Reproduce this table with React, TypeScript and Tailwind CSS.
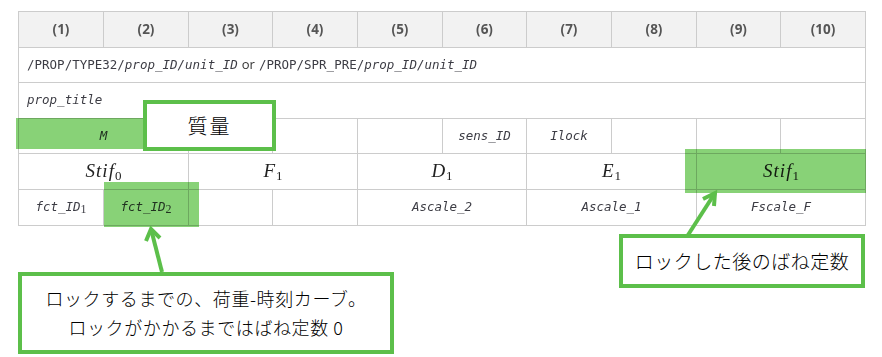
import React from "react";

const mono = "font-['DejaVu_Sans_Mono',monospace] text-[12.5px]";
const cell = "border-r border-b border-[#cccccc] flex items-center justify-center";

function Mono({ children, italic = true }: { children: React.ReactNode; italic?: boolean }) {
  return <span className={`${mono} ${italic ? "italic" : ""} text-[#3c3c44]`}>{children}</span>;
}

function Sub({ children }: { children: React.ReactNode }) {
  return (
    <sub className="font-['Liberation_Serif',serif] not-italic text-[12px] relative top-[2px] align-baseline">
      {children}
    </sub>
  );
}

function Math({ base, sub }: { base: string; sub: string }) {
  return (
    <span className="font-['Liberation_Serif',serif] italic text-[19px] tracking-[1px] text-[#222]">
      {base}
      <sub className="not-italic text-[13px] tracking-normal relative top-[3px] align-baseline">{sub}</sub>
    </span>
  );
}

function Arrow({ x1, y1, x2, y2, a, b }: { x1: number; y1: number; x2: number; y2: number; a: [number, number]; b: [number, number] }) {
  return (
    <g stroke="#5cbf4a" strokeWidth={4} fill="none" strokeLinecap="butt" strokeLinejoin="miter">
      <line x1={x1} y1={y1} x2={x2} y2={y2} />
      <polyline points={`${a[0]},${a[1]} ${x2},${y2} ${b[0]},${b[1]}`} />
    </g>
  );
}

export default function App() {
  const heads = ["(1)", "(2)", "(3)", "(4)", "(5)", "(6)", "(7)", "(8)", "(9)", "(10)"];
  const jp = "font-['Noto_Sans_CJK_JP',sans-serif] font-light text-black";

  return (
    <div className="relative w-[882px] h-[357px] bg-white overflow-hidden">
      <div className="pt-[11px] pl-[18px]">
        <div className="grid grid-cols-[85px_85px_84px_85px_85px_84px_85px_85px_84px_85px] grid-rows-[36px_35px_36px_35px_36px_36px] w-[848px] border-l border-t border-[#cccccc] text-[#333] font-['Open_Sans',sans-serif]">
          {heads.map((h) => (
            <div key={h} className={`${cell} bg-[#f2f2f2] font-bold text-[13.5px] text-[#555]`}>
              {h}
            </div>
          ))}

          <div className="col-span-10 border-r border-b border-[#cccccc] flex items-center px-[8px] text-[13px]">
            <Mono italic={false}>/PROP/TYPE32/</Mono>
            <Mono>prop_ID/unit_ID</Mono>
            <span className="mx-[4px] text-[#333]">or</span>
            <Mono italic={false}>/PROP/SPR_PRE/</Mono>
            <Mono>prop_ID/unit_ID</Mono>
          </div>

          <div className="col-span-10 border-r border-b border-[#cccccc] flex items-center px-[8px]">
            <Mono>prop_title</Mono>
          </div>

          <div className={`${cell} col-span-2`}>
            <Mono>M</Mono>
          </div>
          <div className={cell} />
          <div className={cell} />
          <div className={cell} />
          <div className={cell}>
            <Mono>sens_ID</Mono>
          </div>
          <div className={cell}>
            <Mono>Ilock</Mono>
          </div>
          <div className={cell} />
          <div className={cell} />
          <div className={cell} />

          <div className={`${cell} col-span-2`}>
            <Math base="Stif" sub="0" />
          </div>
          <div className={`${cell} col-span-2`}>
            <Math base="F" sub="1" />
          </div>
          <div className={`${cell} col-span-2`}>
            <Math base="D" sub="1" />
          </div>
          <div className={`${cell} col-span-2`}>
            <Math base="E" sub="1" />
          </div>
          <div className={`${cell} col-span-2`}>
            <Math base="Stif" sub="1" />
          </div>

          <div className={cell}>
            <Mono>
              fct_ID<Sub>1</Sub>
            </Mono>
          </div>
          <div className={cell}>
            <Mono>
              fct_ID<Sub>2</Sub>
            </Mono>
          </div>
          <div className={cell} />
          <div className={cell} />
          <div className={`${cell} col-span-2`}>
            <Mono>Ascale_2</Mono>
          </div>
          <div className={`${cell} col-span-2`}>
            <Mono>Ascale_1</Mono>
          </div>
          <div className={`${cell} col-span-2`}>
            <Mono>Fscale_F</Mono>
          </div>
        </div>
      </div>

      {/* highlighted cells */}
      <div className="absolute left-[16px] top-[118px] w-[130px] h-[31px] bg-[#88d277] mix-blend-multiply" />
      <div className="absolute left-[104px] top-[182px] w-[95px] h-[45px] bg-[#88d277] mix-blend-multiply" />
      <div className="absolute left-[685px] top-[149px] w-[181px] h-[44px] bg-[#88d277] mix-blend-multiply" />

      {/* pointer arrows */}
      <svg className="absolute left-0 top-0" width={882} height={357}>
        <Arrow x1={162} y1={272} x2={151} y2={229} a={[146, 241]} b={[160, 238]} />
        <Arrow x1={688} y1={235} x2={715} y2={193} a={[703, 199]} b={[714, 206]} />
      </svg>

      {/* annotation boxes */}
      <div className={`absolute left-[143px] top-[100px] w-[133px] h-[51px] border-[4px] border-[#5cbf4a] bg-white flex items-center justify-center ${jp} text-[20px] tracking-[2px]`}>
        質量
      </div>
      <div className={`absolute left-[18px] top-[272px] w-[376px] h-[82px] border-[4px] border-[#5cbf4a] bg-white flex flex-col items-center justify-center ${jp} text-[18px] leading-[29px] tracking-[0.6px]`}>
        <div>ロックするまでの、荷重-時刻カーブ。</div>
        <div>ロックがかかるまではばね定数 0</div>
      </div>
      <div className={`absolute left-[619px] top-[234px] w-[246px] h-[54px] border-[4px] border-[#5cbf4a] bg-white flex items-center justify-center ${jp} text-[19px] tracking-[0.5px]`}>
        ロックした後のばね定数
      </div>
    </div>
  );
}
